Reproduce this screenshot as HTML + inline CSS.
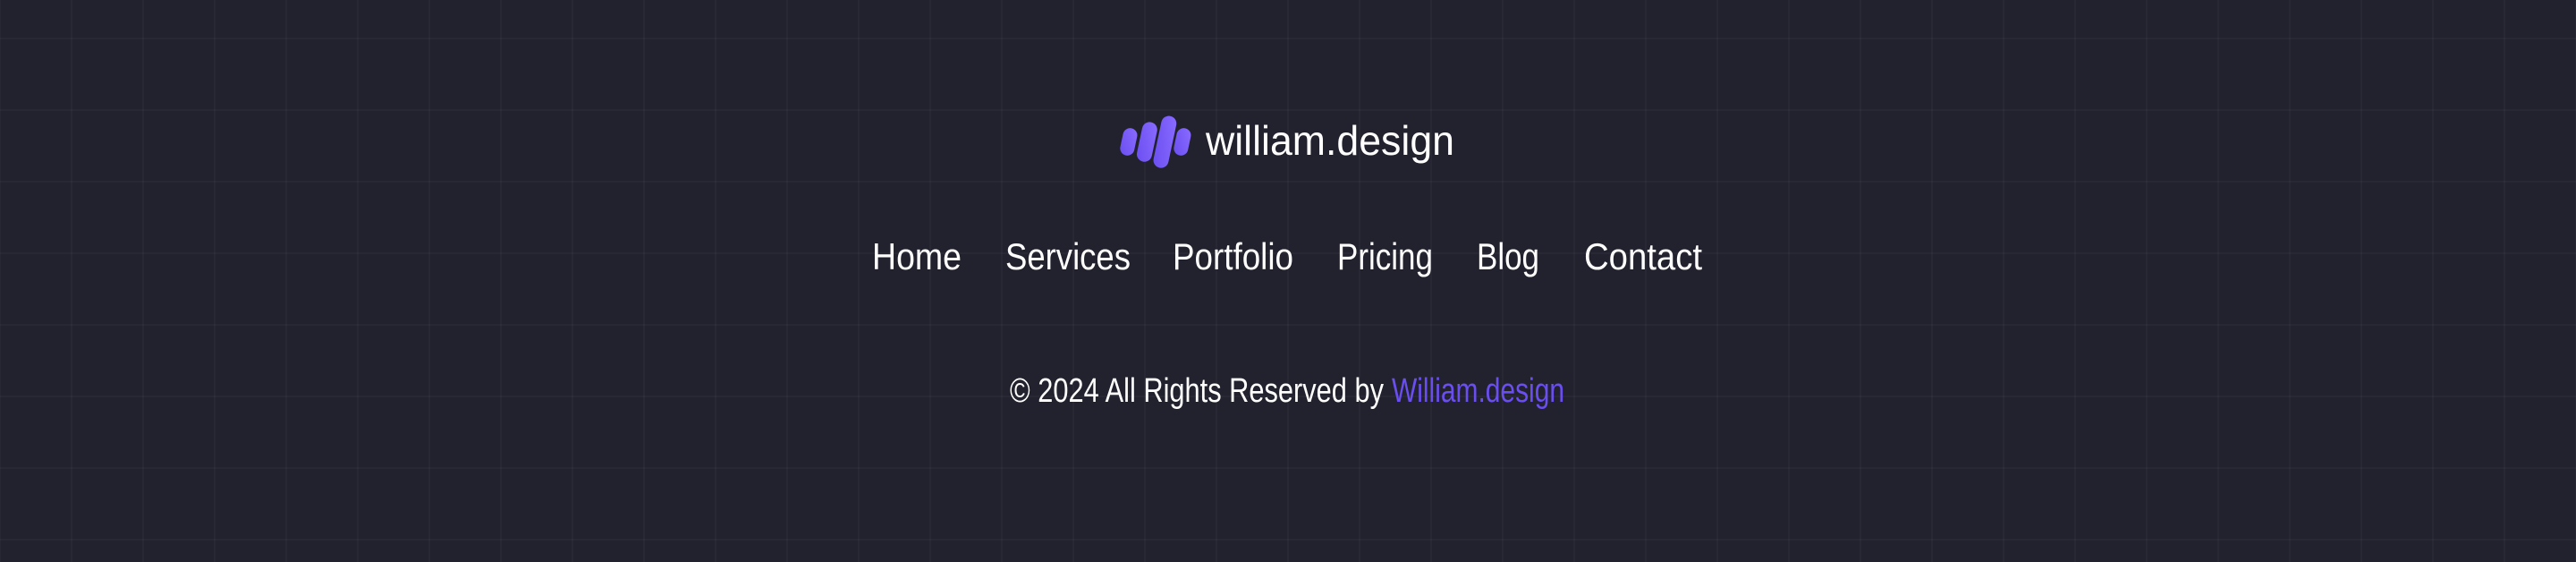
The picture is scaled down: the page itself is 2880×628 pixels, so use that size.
<!DOCTYPE html>
<html><head><meta charset="utf-8"><style>
html,body{margin:0;padding:0;background:#22222e;}
body{width:2880px;height:628px;overflow:hidden;position:relative;
background-color:#22222e;
background-image:
linear-gradient(to right, rgba(255,255,255,0.028) 0 2px, transparent 2px),
linear-gradient(to bottom, rgba(255,255,255,0.028) 0 2px, transparent 2px);
background-size:80px 80px;background-position:79px 42px;}
svg{position:absolute;left:0;top:0;}
text{font-family:"Liberation Sans",sans-serif;fill:#ffffff;}
</style></head><body>
<svg width="2880" height="628" viewBox="0 0 2880 628">
<defs><linearGradient id="g" x1="0" y1="1" x2="1" y2="0">
<stop offset="0" stop-color="#6a4ef0"/><stop offset="1" stop-color="#8a6cff"/></linearGradient></defs>
<g fill="url(#g)">
<rect x="1254" y="143" width="16" height="31" rx="8" transform="rotate(12 1262 158)"/>
<rect x="1274" y="136" width="17" height="45" rx="8.5" transform="rotate(12 1282 158)"/>
<rect x="1294" y="129" width="17" height="59" rx="8.5" transform="rotate(12 1302 158)"/>
<rect x="1314" y="143" width="16" height="31" rx="8" transform="rotate(12 1322 158)"/>
</g>
<text x="1348" y="173" font-size="46" textLength="278" lengthAdjust="spacingAndGlyphs">william.design</text>
<g font-size="42">
<text x="975" y="301" textLength="100" lengthAdjust="spacingAndGlyphs">Home</text>
<text x="1124" y="301" textLength="140" lengthAdjust="spacingAndGlyphs">Services</text>
<text x="1311" y="301" textLength="135" lengthAdjust="spacingAndGlyphs">Portfolio</text>
<text x="1495" y="301" textLength="107" lengthAdjust="spacingAndGlyphs">Pricing</text>
<text x="1651" y="301" textLength="70" lengthAdjust="spacingAndGlyphs">Blog</text>
<text x="1771" y="301" textLength="132" lengthAdjust="spacingAndGlyphs">Contact</text>
</g>
<text x="1129" y="449" font-size="38" textLength="418" lengthAdjust="spacingAndGlyphs">© 2024 All Rights Reserved by</text>
<text x="1556" y="449" font-size="38" textLength="193" lengthAdjust="spacingAndGlyphs" style="fill:#6a4ef0">William.design</text>
</svg>
</body></html>
